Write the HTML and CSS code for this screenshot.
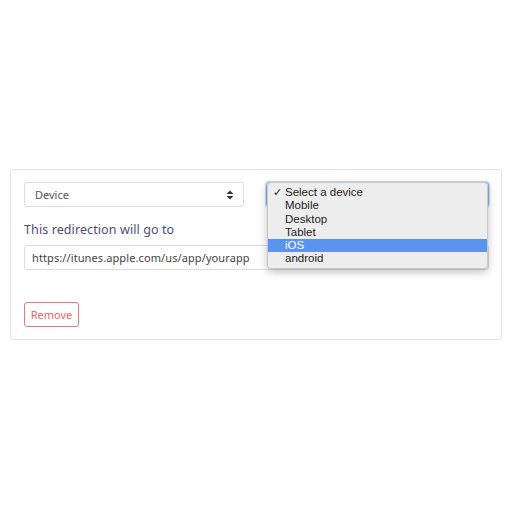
FILE: index.html
```html
<!DOCTYPE html>
<html>
<head>
<meta charset="utf-8">
<link rel="stylesheet" href="styles.css">
</head>
<body>
<div class="page">
  <div class="card">
    <div class="row">
      <div class="select">
        <span>Device</span>
        <svg class="caret" width="8" height="10" viewBox="0 0 8 10"><path d="M4 0.5 L7.5 4 L0.5 4 Z M4 9.5 L7.5 6 L0.5 6 Z" fill="#333"/></svg>
      </div>
      <div class="col-right">
        <div class="select focus"></div>
        <ul class="menu">
          <li><span class="check">✓</span>Select a device</li>
          <li>Mobile</li>
          <li>Desktop</li>
          <li>Tablet</li>
          <li class="active">iOS</li>
          <li>android</li>
        </ul>
      </div>
    </div>
    <div class="label">This redirection will go to</div>
    <div class="input">https://itunes.apple.com/us/app/yourapp</div>
    <div class="actions"><button class="remove">Remove</button></div>
  </div>
</div>
</body>
</html>
```
FILE: styles.css
```css
html, body { margin: 0; padding: 0; background: #fff; }
body { font-family: "Noto Sans", "Open Sans", sans-serif; width: 512px; height: 512px; }
.page { padding: 169px 10px 0 10px; }
.card {
  border: 1px solid #e3e3e3;
  border-radius: 3px;
  padding: 12px 12px 12px 13px;
  height: 145px;
}
.row { display: grid; grid-template-columns: 220px 223px; column-gap: 22px; }
.col-right { position: relative; }
.select {
  box-sizing: border-box;
  height: 25px;
  border: 1px solid #dcdcdc;
  border-radius: 3px;
  display: flex;
  align-items: center;
  justify-content: space-between;
  padding: 0 9px 0 10px;
  font-size: 11px;
  color: #555;
}
.select.focus { border-color: #8cb4e8; box-shadow: 0 0 0 1px #c5dbf5; }
.caret { display: block; }
.menu {
  position: absolute;
  left: 1px; top: 0;
  width: 219px;
  margin: 0; padding: 3px 0 2px 0;
  list-style: none;
  background: #ededed;
  border: 1px solid #c9c9c9;
  border-radius: 4px;
  box-shadow: 0 3px 8px rgba(0,0,0,0.25);
  font-family: "Liberation Sans", Arial, sans-serif;
  font-size: 11.5px;
  color: #222;
  z-index: 2;
}
.menu li { height: 13.3px; line-height: 13.3px; padding-left: 17px; position: relative; }
.menu li.active { background: #5b94ee; color: #fff; }
.check { position: absolute; left: 5px; top: 0; font-size: 11px; }
.label {
  margin-top: 14px;
  font-size: 12.5px;
  color: #4c4e78;
  letter-spacing: 0.1px;
  height: 17px;
  line-height: 17px;
}
.input {
  box-sizing: border-box;
  margin-top: 7px;
  height: 25px;
  border: 1px solid #dcdcdc;
  border-radius: 3px;
  font-size: 11px;
  color: #444;
  padding: 0 7px;
  line-height: 23px;
  letter-spacing: 0.1px;
}
.actions { margin-top: 32px; }
.remove {
  box-sizing: border-box;
  height: 25px;
  width: 55px;
  background: #fff;
  border: 1px solid #f0727d;
  border-radius: 3px;
  color: #ef5f6c;
  font-family: "Noto Sans", sans-serif;
  font-size: 11px;
  padding: 0;
}
```
